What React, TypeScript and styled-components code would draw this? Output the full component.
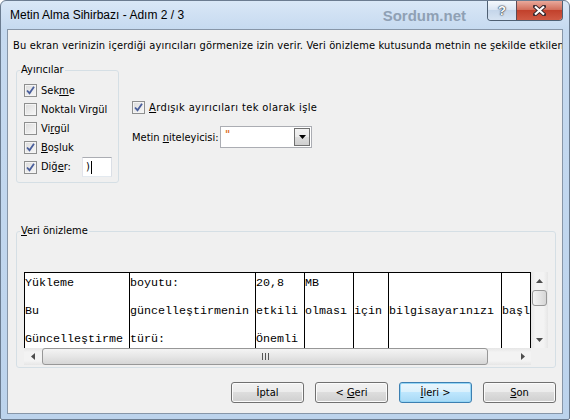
import React from "react";
import styled, { createGlobalStyle } from "styled-components";

const GlobalStyle = createGlobalStyle`
  html, body {
    margin: 0;
    padding: 0;
    background: #ffffff;
  }
  body {
    font-family: "DejaVu Sans Condensed", "Liberation Sans", Arial, sans-serif;
    font-size: 11px;
    color: #000;
  }
`;

const Frame = styled.div`
  width: 570px;
  height: 420px;
  box-sizing: border-box;
  border: 1px solid #6b7c90;
  border-radius: 6px 6px 2px 2px;
  background: linear-gradient(#d9e7f6, #c6daf0 28px, #bcd3ec);
  padding: 0 6px 5px;
  display: flex;
  flex-direction: column;
  overflow: hidden;
`;

const TitleBar = styled.div`
  height: 28px;
  display: flex;
  align-items: center;
  padding-left: 3px;
`;

const Title = styled.div`
  font-family: "Liberation Sans", Arial, sans-serif;
  font-size: 12px;
  color: #000;
  flex: 1;
`;

const Watermark = styled.div`
  font-family: "Liberation Sans", Arial, sans-serif;
  font-size: 15px;
  font-weight: bold;
  color: #8fa0b4;
  margin-right: 21px;
`;

const CaptionButtons = styled.div`
  align-self: flex-start;
  display: flex;
  height: 19px;
  border: 1px solid #4f6073;
  border-top: none;
  border-radius: 0 0 4px 4px;
  overflow: hidden;
`;

const CaptionButton = styled.div<{ $close?: boolean }>`
  width: ${(p) => (p.$close ? 45 : 28)}px;
  display: flex;
  align-items: center;
  justify-content: center;
  background: ${(p) =>
    p.$close
      ? "linear-gradient(#e9a99b, #d2705d 45%, #c2412c 50%, #d05a44)"
      : "linear-gradient(#f4f8fc, #dbe6f3 45%, #c5d6ea 50%, #d6e3f2)"};
  border-left: ${(p) => (p.$close ? "1px solid #5b4b55" : "none")};
  color: #fff;
  font-family: "Liberation Sans", Arial, sans-serif;
  font-weight: bold;
  font-size: 13px;
  text-shadow: 0 0 1px #2c3a4c, 0 0 1px #2c3a4c, 0 0 2px #2c3a4c;
`;

const Client = styled.div`
  flex: 1;
  background: #f0f0f0;
  border: 1px solid #8796a8;
  display: flex;
  flex-direction: column;
  min-height: 0;
`;

const Description = styled.div`
  margin-top: 9px;
  padding-left: 5px;
  line-height: 14px;
  letter-spacing: 0.15px;
  white-space: nowrap;
  overflow: hidden;
`;

const OptionsRow = styled.div`
  margin-top: 10px;
  display: flex;
  align-items: flex-start;
`;

const Group = styled.fieldset<{ $width: number }>`
  margin: 0 0 0 8px;
  padding: 0;
  width: ${(p) => p.$width}px;
  box-sizing: border-box;
  border: 1px solid #d5dfe5;
  border-radius: 3px;
  min-width: 0;
`;

const Legend = styled.legend`
  margin-left: 3px;
  padding: 0 1px;
  line-height: 14px;
  font-size: 11px;
`;

const SeparatorList = styled.div`
  padding: 4px 6px 5px 7px;
  display: flex;
  flex-direction: column;
`;

const CheckRow = styled.label<{ $tall?: boolean; $spread?: boolean }>`
  height: ${(p) => (p.$tall ? 20 : 19)}px;
  display: flex;
  align-items: center;
  gap: 4px;
  line-height: 14px;
  white-space: nowrap;
  letter-spacing: ${(p) => (p.$spread ? "0.4px" : "normal")};
`;

const Box = styled.span`
  width: 13px;
  height: 13px;
  box-sizing: border-box;
  border: 1px solid #8e8f8f;
  background: linear-gradient(135deg, #dcdcdc, #f7f7f7);
  box-shadow: inset 0 0 0 1px #f4f4f4;
  display: flex;
  align-items: center;
  justify-content: center;
  flex: none;
`;

const SmallInput = styled.div`
  margin-left: auto;
  width: 30px;
  height: 20px;
  box-sizing: border-box;
  background: #fff;
  border: 1px solid #abadb3;
  border-color: #abadb3 #dbdfe6 #e3e9ef #e2e3ea;
  display: flex;
  align-items: center;
  padding-left: 3px;
`;

const Caret = styled.span`
  display: inline-block;
  width: 1px;
  height: 13px;
  background: #000;
  margin-left: 1px;
`;

const RightColumn = styled.div`
  margin-left: 13px;
  display: flex;
  flex-direction: column;
`;

const QualifierRow = styled.div`
  margin-top: 9px;
  display: flex;
  align-items: center;
  height: 22px;
`;

const FieldLabel = styled.span`
  width: 88px;
  white-space: nowrap;
`;

const Combo = styled.div`
  width: 92px;
  height: 22px;
  box-sizing: border-box;
  border: 1px solid #abadb3;
  background: #fff;
  padding: 1px;
  display: flex;
`;

const ComboText = styled.div`
  flex: 1;
  padding: 1px 0 0 3px;
  color: #e0701c;
  font-size: 11px;
  font-weight: bold;
  line-height: 11px;
`;

const DropButton = styled.div`
  width: 16px;
  box-sizing: border-box;
  border: 1px solid #707070;
  background: linear-gradient(#f2f2f2, #ebebeb 50%, #dddddd 50%, #cfcfcf);
  display: flex;
  align-items: center;
  justify-content: center;
`;

const PreviewGroup = styled(Group)`
  margin-top: 41px;
`;

const PreviewInner = styled.div`
  padding: 34px 0 2px 7px;
`;

const PreviewArea = styled.div`
  display: grid;
  grid-template-columns: 507px 17px;
  grid-template-rows: 76px 17px;
  width: 524px;
`;

const Table = styled.div`
  background: #fff;
  border-top: 1px solid #000;
  border-right: 1px solid #000;
  overflow: hidden;
  font-family: "Liberation Mono", "Courier New", monospace;
  font-size: 11.67px;
  line-height: 14px;
`;

const DataRow = styled.div<{ $cols: string }>`
  display: grid;
  grid-template-columns: ${(p) => p.$cols};
`;

const DataCell = styled.div`
  height: 28px;
  box-sizing: border-box;
  border-left: 1px solid #000;
  padding-top: 3px;
  white-space: pre;
  overflow: hidden;
`;

const VScroll = styled.div`
  display: flex;
  flex-direction: column;
  background: linear-gradient(to right, #e6e6e6, #f3f3f3 25%, #f3f3f3 75%, #e6e6e6);
`;

const HScroll = styled.div`
  display: flex;
  background: linear-gradient(#e6e6e6, #f3f3f3 25%, #f3f3f3 75%, #e6e6e6);
`;

const ArrowButton = styled.div`
  width: 17px;
  height: 17px;
  flex: none;
  display: flex;
  align-items: center;
  justify-content: center;
`;

const Track = styled.div<{ $vertical?: boolean }>`
  flex: 1;
  display: flex;
  flex-direction: ${(p) => (p.$vertical ? "column" : "row")};
  padding: ${(p) => (p.$vertical ? "1px 0 0 1px" : "0 0 0 1px")};
`;

const Thumb = styled.div<{ $vertical?: boolean }>`
  box-sizing: border-box;
  width: ${(p) => (p.$vertical ? "15px" : "446px")};
  height: ${(p) => (p.$vertical ? "16px" : "17px")};
  border: 1px solid #979797;
  border-radius: 3px;
  background: ${(p) =>
    p.$vertical
      ? "linear-gradient(to right, #f4f4f4, #e6e6e6 50%, #d6d6d6)"
      : "linear-gradient(#f4f4f4, #e6e6e6 50%, #d6d6d6)"};
  display: flex;
  align-items: center;
  justify-content: center;
`;

const Corner = styled.div`
  background: #f0f0f0;
`;

const ButtonRow = styled.div`
  margin-top: 14px;
  display: flex;
  justify-content: flex-end;
  gap: 11px;
  padding-right: 6px;
`;

const PushButton = styled.div<{ $default?: boolean }>`
  width: 73px;
  height: 21px;
  box-sizing: border-box;
  border: 1px solid ${(p) => (p.$default ? "#3c7fb1" : "#707070")};
  border-radius: 3px;
  background: ${(p) =>
    p.$default
      ? "linear-gradient(#eaf6fd, #d9f0fc 50%, #bee6fd 50%, #a7d9f5)"
      : "linear-gradient(#f2f2f2, #ebebeb 50%, #dddddd 50%, #cfcfcf)"};
  box-shadow: inset 0 0 0 1px ${(p) => (p.$default ? "#95d6f6" : "#fbfbfb")};
  display: flex;
  align-items: center;
  justify-content: center;
  line-height: 14px;
`;

const Check = ({ checked }: { checked?: boolean }) => (
  <Box>
    {checked && (
      <svg width="11" height="11" viewBox="0 0 11 11">
        <path d="M2 5.5 L4.5 8.2 L9 1.8" fill="none" stroke="#4a5f9c" strokeWidth="1.8" />
      </svg>
    )}
  </Box>
);

const Arrow = ({ dir }: { dir: "up" | "down" | "left" | "right" }) => {
  const pts = {
    up: "1,5 4.5,1 8,5",
    down: "1,1 4.5,5 8,1",
    left: "5,1 1,4.5 5,8",
    right: "1,1 5,4.5 1,8",
  }[dir];
  const vertical = dir === "up" || dir === "down";
  return (
    <svg width={vertical ? 9 : 6} height={vertical ? 6 : 9} viewBox={vertical ? "0 0 9 6" : "0 0 6 9"}>
      <polygon points={pts} fill="#4d4d4d" />
    </svg>
  );
};

const columns = [105, 126, 49, 49, 35, 113, 29];
const cols = columns.map((c) => `${c}px`).join(" ");

const rows = [
  ["Yükleme", "boyutu:", "20,8", "MB", "", "", ""],
  ["Bu", "güncelleştirmenin", "etkili", "olması", "için", "bilgisayarınızı", "başlatmanızı"],
  ["Güncelleştirme", "türü:", "Önemli", "", "", "", ""],
];

export default function App() {
  return (
    <>
      <GlobalStyle />
      <Frame>
        <TitleBar>
          <Title>Metin Alma Sihirbazı - Adım 2 / 3</Title>
          <Watermark>Sordum.net</Watermark>
          <CaptionButtons>
            <CaptionButton>?</CaptionButton>
            <CaptionButton $close>
              <svg width="13" height="11" viewBox="0 0 13 11">
                <path
                  d="M2 1.5 L11 9.5 M11 1.5 L2 9.5"
                  stroke="#3a2a30"
                  strokeWidth="4"
                  strokeLinecap="square"
                />
                <path d="M2 1.5 L11 9.5 M11 1.5 L2 9.5" stroke="#fff" strokeWidth="2.2" />
              </svg>
            </CaptionButton>
          </CaptionButtons>
        </TitleBar>
        <Client>
          <Description>
            Bu ekran verinizin içerdiği ayırıcıları görmenize izin verir. Veri önizleme kutusunda metnin ne
            şekilde etkilendiğini görebilirsiniz.
          </Description>
          <OptionsRow>
            <Group $width={103}>
              <Legend>Ayırıcılar</Legend>
              <SeparatorList>
                <CheckRow>
                  <Check checked />
                  <span>
                    Sek<u>m</u>e
                  </span>
                </CheckRow>
                <CheckRow>
                  <Check />
                  <span>Noktalı Virgül</span>
                </CheckRow>
                <CheckRow>
                  <Check />
                  <span>
                    Vi<u>r</u>gül
                  </span>
                </CheckRow>
                <CheckRow>
                  <Check checked />
                  <span>
                    <u>B</u>oşluk
                  </span>
                </CheckRow>
                <CheckRow $tall>
                  <Check checked />
                  <span>
                    Diğ<u>e</u>r:
                  </span>
                  <SmallInput>
                    )<Caret />
                  </SmallInput>
                </CheckRow>
              </SeparatorList>
            </Group>
            <RightColumn>
              <CheckRow $spread style={{ marginTop: 35 }}>
                <Check checked />
                <span>
                  <u>A</u>rdışık ayırıcıları tek olarak işle
                </span>
              </CheckRow>
              <QualifierRow>
                <FieldLabel>
                  Metin <u>n</u>iteleyicisi:
                </FieldLabel>
                <Combo>
                  <ComboText>"</ComboText>
                  <DropButton>
                    <svg width="7" height="4" viewBox="0 0 7 4">
                      <polygon points="0,0 7,0 3.5,4" fill="#000" />
                    </svg>
                  </DropButton>
                </Combo>
              </QualifierRow>
            </RightColumn>
          </OptionsRow>
          <PreviewGroup $width={540}>
            <Legend>
              <u>V</u>eri önizleme
            </Legend>
            <PreviewInner>
              <PreviewArea>
                <Table>
                  {rows.map((r, i) => (
                    <DataRow key={i} $cols={cols}>
                      {r.map((c, j) => (
                        <DataCell key={j}>{c}</DataCell>
                      ))}
                    </DataRow>
                  ))}
                </Table>
                <VScroll>
                  <ArrowButton>
                    <Arrow dir="up" />
                  </ArrowButton>
                  <Track $vertical>
                    <Thumb $vertical />
                  </Track>
                  <ArrowButton>
                    <Arrow dir="down" />
                  </ArrowButton>
                </VScroll>
                <HScroll>
                  <ArrowButton>
                    <Arrow dir="left" />
                  </ArrowButton>
                  <Track>
                    <Thumb>
                      <svg width="7" height="7" viewBox="0 0 7 7">
                        <path d="M0.5 0 V7 M3.5 0 V7 M6.5 0 V7" stroke="#555" strokeWidth="1" />
                      </svg>
                    </Thumb>
                  </Track>
                  <ArrowButton>
                    <Arrow dir="right" />
                  </ArrowButton>
                </HScroll>
                <Corner />
              </PreviewArea>
            </PreviewInner>
          </PreviewGroup>
          <ButtonRow>
            <PushButton>İptal</PushButton>
            <PushButton>
              &lt;&nbsp;<u>G</u>eri
            </PushButton>
            <PushButton $default>
              <u>İ</u>leri&nbsp;&gt;
            </PushButton>
            <PushButton>
              <u>S</u>on
            </PushButton>
          </ButtonRow>
        </Client>
      </Frame>
    </>
  );
}
